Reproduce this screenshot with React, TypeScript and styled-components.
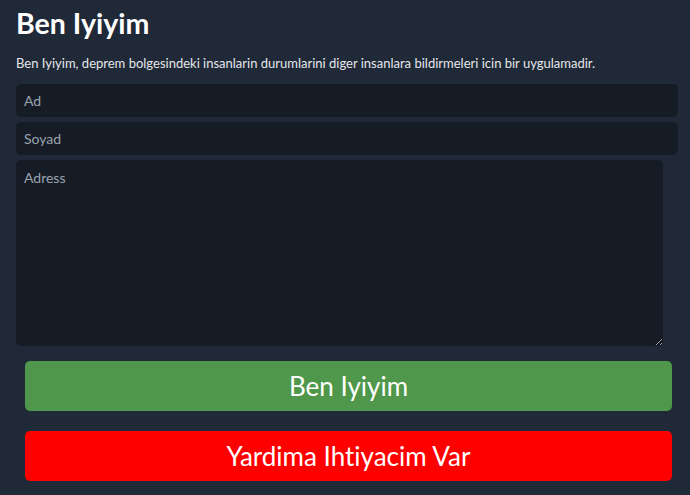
import React, { useState } from "react";
import styled, { createGlobalStyle } from "styled-components";

const GlobalStyle = createGlobalStyle`
  html, body {
    margin: 0;
    padding: 0;
    background: #1f2937;
    font-family: Lato, "Open Sans", sans-serif;
    font-variant-ligatures: none;
  }
`;

const Page = styled.div`
  min-height: 495px;
  padding: 0 12px 0 16px;
  box-sizing: border-box;
  display: flex;
  flex-direction: column;
`;

const Title = styled.h1`
  margin: 3px 0 0;
  font-size: 28.5px;
  line-height: 40px;
  font-weight: 700;
  color: #ffffff;
`;

const Description = styled.p`
  margin: 11px 0 12px;
  font-size: 13px;
  line-height: 18px;
  color: #e5e7eb;
`;

const Form = styled.div`
  display: flex;
  flex-direction: column;
  gap: 5px;
`;

const Input = styled.input`
  box-sizing: border-box;
  width: 100%;
  height: 33px;
  padding: 0 8px;
  font-family: inherit;
  font-size: 14px;
  color: #e5e7eb;
  background: #161c26;
  border: none;
  border-radius: 5px;
  outline: none;

  &::placeholder {
    color: #9ca3af;
  }
`;

const TextArea = styled.textarea`
  box-sizing: border-box;
  width: 647px;
  height: 186px;
  padding: 9px 8px;
  font-family: inherit;
  font-size: 14px;
  color: #e5e7eb;
  background: #161c26;
  border: none;
  border-radius: 5px;
  outline: none;
  resize: both;
  display: block;

  &::placeholder {
    color: #9ca3af;
  }
`;

const Actions = styled.div`
  display: flex;
  flex-direction: column;
  gap: 20px;
  margin: 15px 0 0 9px;
  width: 647px;
`;

const ActionButton = styled.button<{ $tone: string }>`
  height: 50px;
  border: none;
  border-radius: 5px;
  background: ${(p) => p.$tone};
  color: #ffffff;
  font-family: inherit;
  font-size: 26px;
  font-variant-ligatures: none;
  cursor: pointer;
`;

export default function App() {
  const [ad, setAd] = useState("");
  const [soyad, setSoyad] = useState("");
  const [adress, setAdress] = useState("");

  return (
    <>
      <GlobalStyle />
      <Page>
        <Title>Ben Iyiyim</Title>
        <Description>
          Ben Iyiyim, deprem bolgesindeki insanlarin durumlarini diger insanlara bildirmeleri icin bir uygulamadir.
        </Description>
        <Form>
          <Input placeholder="Ad" value={ad} onChange={(e) => setAd(e.target.value)} />
          <Input placeholder="Soyad" value={soyad} onChange={(e) => setSoyad(e.target.value)} />
          <TextArea placeholder="Adress" value={adress} onChange={(e) => setAdress(e.target.value)} />
        </Form>
        <Actions>
          <ActionButton $tone="#4f974a">Ben Iyiyim</ActionButton>
          <ActionButton $tone="#ff0000">Yardima Ihtiyacim Var</ActionButton>
        </Actions>
      </Page>
    </>
  );
}
